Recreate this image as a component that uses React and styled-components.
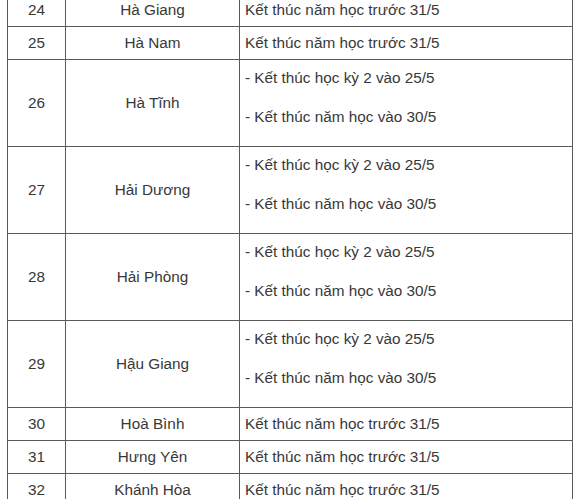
import React from 'react'
import styled, { createGlobalStyle } from 'styled-components'

const GlobalStyle = createGlobalStyle`
    html, body {
        margin: 0;
        padding: 0;
        background: #fff;
        overflow: hidden;
    }
`

const Page = styled.div`
    padding-left: 7px;
    margin-top: -7px;
    font-family: "Liberation Sans", Arial, sans-serif;
    color: #383838;
`

const Table = styled.table`
    border-collapse: collapse;
    table-layout: fixed;
    width: 566px;
    font-size: 15.3px;
    line-height: 20px;
`

const Cell = styled.td`
    border: 1px solid #5a5a5a;
    padding: 6px 5px;
    text-align: ${props => props.align || 'center'};
    vertical-align: middle;
`

const Note = styled.p`
    margin: 2px 0 19px;
    &:last-child {
        margin-bottom: 13px;
    }
`

const rows = [
    { no: 24, name: 'Hà Giang' },
    { no: 25, name: 'Hà Nam' },
    { no: 26, name: 'Hà Tĩnh', split: true },
    { no: 27, name: 'Hải Dương', split: true },
    { no: 28, name: 'Hải Phòng', split: true },
    { no: 29, name: 'Hậu Giang', split: true },
    { no: 30, name: 'Hoà Bình' },
    { no: 31, name: 'Hưng Yên' },
    { no: 32, name: 'Khánh Hòa' },
]

const App = () => {
    return (
        <Page>
            <GlobalStyle />
            <Table>
                <colgroup>
                    <col style={{ width: 58 }} />
                    <col style={{ width: 174 }} />
                    <col />
                </colgroup>
                <tbody>
                    {rows.map(row => (
                        <tr key={row.no}>
                            <Cell>{row.no}</Cell>
                            <Cell>{row.name}</Cell>
                            {row.split ? (
                                <Cell align="left">
                                    <Note>- Kết thúc học kỳ 2 vào 25/5</Note>
                                    <Note>- Kết thúc năm học vào 30/5</Note>
                                </Cell>
                            ) : (
                                <Cell align="left">Kết thúc năm học trước 31/5</Cell>
                            )}
                        </tr>
                    ))}
                </tbody>
            </Table>
        </Page>
    )
}

export default App
